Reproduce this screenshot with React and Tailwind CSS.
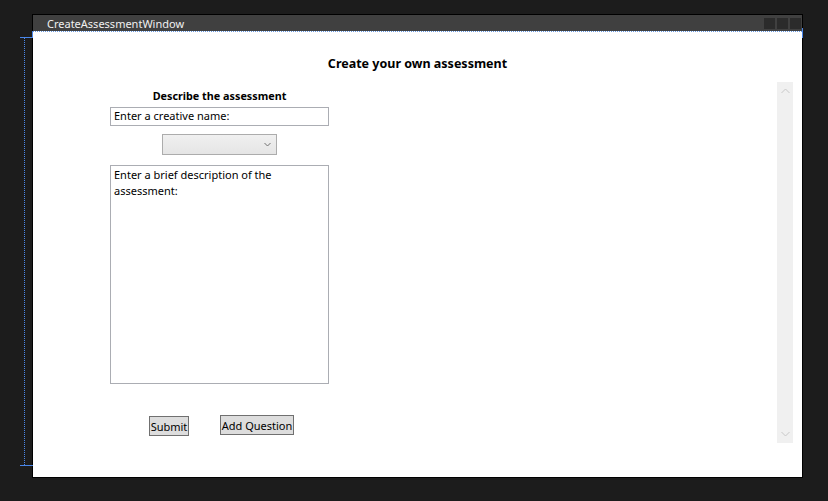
export default function App() {
  const font = { fontFamily: '"Noto Sans", "Open Sans", sans-serif' };

  return (
    <div className="relative w-[828px] h-[501px] bg-[#1c1c1c] pt-[14px] pl-[32px]" style={font}>
      {/* design-time adorners */}
      <div className="absolute left-[20px] top-[37px] w-[13px] h-px bg-[#4a86e8]" />
      <div className="absolute left-[32px] top-[31px] w-px h-[7px] bg-[#4a86e8]" />
      <div className="absolute left-[24px] top-[38px] h-[427px] border-l border-dotted border-[#4a86e8]" />
      <div className="absolute left-[20px] top-[465px] w-[13px] h-px bg-[#4a86e8]" />
      <div className="absolute left-[802px] top-[28px] w-px h-[10px] bg-[#4a86e8]" />

      {/* Window */}
      <div className="w-[771px] h-[464px] border border-black flex flex-col bg-white">
        {/* Title bar */}
        <div className="h-[16px] bg-[#404040] flex items-center pl-[14px] pr-px">
          <span className="text-[11px] leading-none text-[#f0f0f0] flex-1">CreateAssessmentWindow</span>
          <div className="flex gap-[2px] items-center">
            <div className="w-[11px] h-[11px] bg-[#2b2b2b]" />
            <div className="w-[11px] h-[11px] bg-[#2b2b2b]" />
            <div className="w-[11px] h-[11px] bg-[#2b2b2b]" />
          </div>
        </div>
        <div className="border-t border-dotted border-[#6a9ae0]" />

        {/* Content */}
        <div className="flex-1 flex flex-col">
          <div className="pt-[23px] text-center text-[12.5px] font-bold text-black leading-[18px]">
            Create your own assessment
          </div>

          <div className="flex flex-1">
            {/* Left panel */}
            <div className="ml-[77px] mt-[15px] w-[219px] flex flex-col">
              <div className="text-center text-[10.8px] font-bold leading-[16px] text-black">
                Describe the assessment
              </div>
              <div className="mt-[3px] h-[19px] border border-[#abadb3] flex items-center px-[3px] text-[11px] text-black">
                Enter a creative name:
              </div>
              <div className="mt-[8px] self-center w-[115px] h-[21px] border border-[#acacac] bg-gradient-to-b from-[#f0f0f0] to-[#e5e5e5] flex items-center justify-end pr-[5px]">
                <svg width="7" height="5" viewBox="0 0 7 5">
                  <path d="M0.5 1 L3.5 4 L6.5 1" fill="none" stroke="#707070" strokeWidth="1" />
                </svg>
              </div>
              <div className="mt-[10px] h-[219px] border border-[#abadb3] px-[3px] pt-px text-[11px] leading-[16px] text-black">
                Enter a brief description of the assessment:
              </div>
              <div className="mt-[31px] flex items-start">
                <button className="ml-[39px] mt-px w-[40px] h-[20px] bg-[#dddddd] border border-[#707070] text-[11px] leading-none text-black">
                  Submit
                </button>
                <button className="ml-[31px] w-[74px] h-[20px] bg-[#dddddd] border border-[#707070] text-[11px] leading-none text-black">
                  Add Question
                </button>
              </div>
            </div>

            <div className="flex-1" />

            {/* Scrollbar */}
            <div className="mt-[9px] mb-[34px] mr-[9px] w-[16px] bg-[#f0f0f0] flex flex-col justify-between items-center py-[6px]">
              <svg width="9" height="6" viewBox="0 0 9 6">
                <path d="M0.5 5 L4.5 1 L8.5 5" fill="none" stroke="#c8c8c8" strokeWidth="1" />
              </svg>
              <svg width="9" height="6" viewBox="0 0 9 6">
                <path d="M0.5 1 L4.5 5 L8.5 1" fill="none" stroke="#c8c8c8" strokeWidth="1" />
              </svg>
            </div>
          </div>
        </div>
      </div>
    </div>
  );
}
